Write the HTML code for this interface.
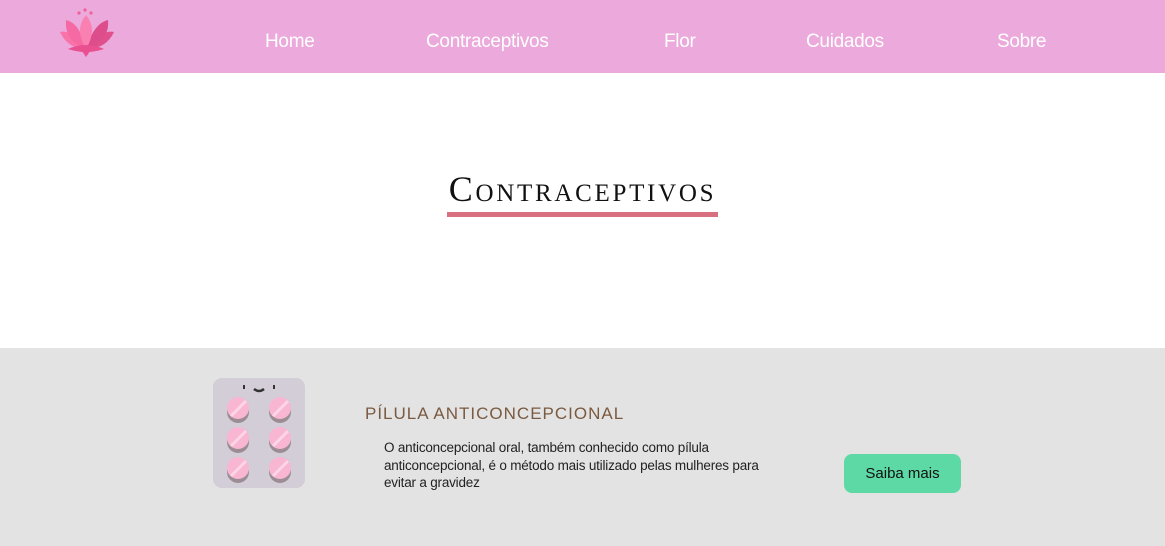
<!DOCTYPE html>
<html><head><style>
body{margin:0;width:1165px;height:546px;overflow:hidden;font-family:"Liberation Sans",sans-serif;background:#fff;position:relative}
.nav{position:absolute;top:0;left:0;width:1165px;height:73px;background:#eba9dc}
.nav a{position:absolute;top:31px;color:#fff;font-size:19px;text-decoration:none;letter-spacing:-0.3px}
h1{position:absolute;top:168px;left:0;width:1165px;text-align:center;margin:0;font-family:"Liberation Serif",serif;font-weight:normal;font-size:36px;font-variant:small-caps;letter-spacing:2.7px;color:#111}
.ul{position:absolute;left:447px;top:212px;width:271px;height:5px;background:#d9707f}
.sec{position:absolute;top:348px;left:0;width:1165px;height:198px;background:#e3e3e3}
.t{position:absolute;left:365px;top:404px;font-size:17px;letter-spacing:1px;color:#7a5a40}
.p{position:absolute;left:384px;top:439px;width:380px;font-size:13.5px;line-height:17.5px;color:#222;letter-spacing:-0.2px}
.b{position:absolute;left:844px;top:454px;width:117px;height:39px;background:#5dd9a6;border-radius:8px;text-align:center;line-height:39px;font-size:15px;color:#111}
</style></head><body>
<div class="nav">
<svg style="position:absolute;left:58px;top:5px" width="58" height="54" viewBox="0 0 58 54">
<circle cx="21" cy="8" r="1.6" fill="#f0609a"/><circle cx="27" cy="5" r="1.6" fill="#f0609a"/><circle cx="33" cy="8" r="1.6" fill="#f0609a"/>
<path d="M2 27 Q14 24 28 44 Q10 44 2 27Z" fill="#f973a8"/>
<path d="M56 27 Q44 24 28 44 Q48 44 56 27Z" fill="#e0508c"/>
<path d="M8 15 Q22 18 28 44 Q6 36 8 15Z" fill="#f56aa2"/>
<path d="M50 15 Q36 18 28 44 Q52 36 50 15Z" fill="#dd4d8b"/>
<path d="M28 10 Q40 24 28 44 Q16 24 28 10Z" fill="#fb80b2"/>
<path d="M10 44 Q28 36 46 44 Q28 50 10 44Z" fill="#e8508f"/>
<path d="M24 46 L28 52 L32 46Z" fill="#e8508f"/>
</svg>
<a style="left:265px">Home</a><a style="left:426px">Contraceptivos</a><a style="left:664px">Flor</a><a style="left:806px">Cuidados</a><a style="left:997px">Sobre</a>
</div>
<h1>Contraceptivos</h1><div class="ul"></div>
<div class="sec"></div>
<svg style="position:absolute;left:213px;top:378px" width="92" height="110" viewBox="0 0 92 110">
<rect width="92" height="110" rx="9" fill="#d2cdd6"/>
<rect x="30" y="7" width="2" height="4" fill="#333"/><rect x="60" y="7" width="2" height="4" fill="#333"/>
<path d="M41 11 Q46 15 51 11" stroke="#333" stroke-width="2.5" fill="none"/>
<g id="p"><circle cx="25" cy="34" r="11" fill="#9b8d93"/><circle cx="25" cy="30" r="11" fill="#f8b6d2"/><path d="M18 38 L33 23" stroke="#fcd5e6" stroke-width="3"/></g>
<use href="#p" x="42"/><use href="#p" y="30"/><use href="#p" x="42" y="30"/><use href="#p" y="60"/><use href="#p" x="42" y="60"/>
</svg>
<div class="t">PÍLULA ANTICONCEPCIONAL</div>
<div class="p">O anticoncepcional oral, também conhecido como pílula anticoncepcional, é o método mais utilizado pelas mulheres para evitar a gravidez</div>
<div class="b">Saiba mais</div>
</body></html>
